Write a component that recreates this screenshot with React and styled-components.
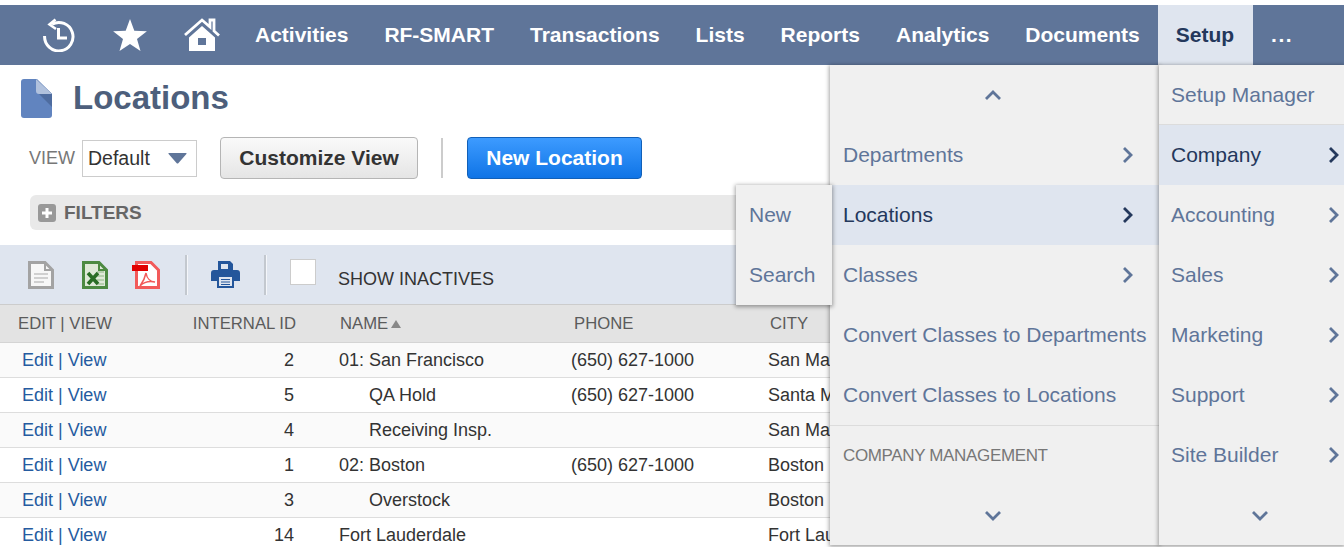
import React from "react";
import styled, { createGlobalStyle } from "styled-components";

const GlobalStyle = createGlobalStyle`
  html, body {
    margin: 0;
    height: 100%;
    overflow: hidden;
    background: #fff;
    font-family: "Liberation Sans", Arial, sans-serif;
  }
`;

const Page = styled.div`
  position: relative;
  width: 1344px;
  height: 547px;
  overflow: hidden;
  padding-top: 5px;
  box-sizing: border-box;
`;

const NavBar = styled.nav`
  height: 60px;
  background: #5f7599;
  display: flex;
  align-items: stretch;
`;

const NavIcons = styled.div`
  width: 237px;
  padding-left: 42px;
  box-sizing: border-box;
  display: flex;
  align-items: center;
  gap: 37px;
`;

const NavItem = styled.div`
  display: flex;
  align-items: center;
  padding: 0 ${(p) => (p.$active ? 19 : 18)}px 0 18px;
  font-size: 21px;
  font-weight: 700;
  letter-spacing: ${(p) => p.$spacing || 0}px;
  color: ${(p) => (p.$active ? "#24385c" : "#fff")};
  background: ${(p) => (p.$active ? "#dfe5ef" : "transparent")};
`;

const TitleRow = styled.div`
  height: 64px;
  box-sizing: border-box;
  padding: 2px 0 0 21px;
  display: flex;
  align-items: center;
  gap: 21px;
`;

const Title = styled.h1`
  margin: 0;
  font-size: 33px;
  font-weight: 700;
  color: #4d5f7c;
`;

const ViewRow = styled.div`
  height: 58px;
  padding: 0 0 0 29px;
  display: flex;
  align-items: center;
`;

const ViewLabel = styled.span`
  font-size: 18px;
  color: #777;
  margin-right: 7px;
`;

const SelectBox = styled.div`
  width: 115px;
  height: 37px;
  box-sizing: border-box;
  border: 1px solid #ccc;
  display: flex;
  align-items: center;
  padding: 0 9px 0 5px;
  justify-content: space-between;
  font-size: 19.5px;
  color: #333;
  margin-right: 23px;
`;

const Button = styled.div`
  height: 42px;
  box-sizing: border-box;
  display: flex;
  align-items: center;
  justify-content: center;
  width: ${(p) => p.$width}px;
  border-radius: 4px;
  font-size: 21px;
  font-weight: 700;
  border: 1px solid ${(p) => (p.$primary ? "#1160b8" : "#b5b5b5")};
  color: ${(p) => (p.$primary ? "#fff" : "#333")};
  background: ${(p) =>
    p.$primary
      ? "linear-gradient(#3d9bff, #0f74e6)"
      : "linear-gradient(#fafafa, #e5e5e5)"};
`;

const ButtonDivider = styled.div`
  width: 2px;
  height: 40px;
  background: #ccc;
  margin: 0 24px 0 23px;
`;

const FilterBar = styled.div`
  height: 35px;
  margin: 8px 0 15px 30px;
  background: #e9e9e9;
  border-radius: 6px 0 0 6px;
  display: flex;
  align-items: center;
  padding-left: 8px;
  gap: 8px;
  font-size: 19px;
  font-weight: 700;
  color: #666;
`;

const PlusBox = styled.span`
  width: 18px;
  height: 18px;
  border-radius: 3px;
  background: #999;
  display: flex;
  align-items: center;
  justify-content: center;
`;

const Toolbar = styled.div`
  height: 60px;
  box-sizing: border-box;
  background: #dfe5ef;
  border-bottom: 1px solid #ccc;
  display: flex;
  align-items: center;
  padding-left: 28px;
`;

const ToolIcon = styled.span`
  display: flex;
  width: ${(p) => p.$width || 26}px;
  margin-right: ${(p) => p.$gap || 0}px;
`;

const ToolDivider = styled.span`
  width: 2px;
  height: 40px;
  background: #c3c8cf;
  border-right: 1px solid #f4f6fa;
  margin-right: ${(p) => p.$gap}px;
`;

const CheckBox = styled.span`
  width: 26px;
  height: 26px;
  box-sizing: border-box;
  background: #fff;
  border: 1px solid #ccc;
  margin: -6px 22px 0 0;
`;

const ToolLabel = styled.span`
  font-size: 18px;
  color: #333;
  margin-top: 9px;
`;

const HeaderRow = styled.div`
  height: 38px;
  box-sizing: border-box;
  background: #e3e3e3;
  border-bottom: 1px solid #d4d4d4;
  display: grid;
  grid-template-columns: 132px 146px 278px 196px 1fr;
  align-items: center;
  padding-left: 18px;
  font-size: 16.7px;
  color: #5b5b5b;
`;

const HeadCell = styled.div`
  padding-left: ${(p) => p.$pad || 0}px;
  display: flex;
  align-items: center;
  justify-content: ${(p) => (p.$right ? "flex-end" : "flex-start")};
  gap: 3px;
`;

const SortMark = styled.span`
  width: 0;
  height: 0;
  border-left: 5px solid transparent;
  border-right: 5px solid transparent;
  border-bottom: 8px solid #888;
`;

const Row = styled.div`
  height: 35px;
  box-sizing: border-box;
  background: ${(p) => (p.$odd ? "#fafafa" : "#fff")};
  border-bottom: 1px solid #ddd;
  display: grid;
  grid-template-columns: 130px 142px 277px 197px 1fr;
  align-items: center;
  padding-left: 22px;
  font-size: 18px;
  color: #333;
  white-space: nowrap;
`;

const EditLink = styled.div`
  color: #255ba0;
`;

const IdCell = styled.div`
  text-align: right;
`;

const NameCell = styled.div`
  padding-left: ${(p) => (p.$indent ? 75 : 45)}px;
`;

const Menu = styled.div`
  position: absolute;
  top: ${(p) => p.$top}px;
  left: ${(p) => p.$left}px;
  width: ${(p) => p.$width}px;
  background: #f0f0f0;
  box-shadow: 0 1px 4px 1px rgba(0, 0, 0, 0.35);
`;

const MenuRow = styled.div`
  height: 60px;
  box-sizing: border-box;
  display: flex;
  align-items: center;
  justify-content: space-between;
  padding: 0 ${(p) => p.$right ?? 26}px 0 ${(p) => p.$pad ?? 13}px;
  font-size: 21px;
  color: ${(p) => (p.$active ? "#24385c" : "#5f7599")};
  background: ${(p) => (p.$active ? "#dfe5ef" : "transparent")};
  border-bottom: ${(p) => (p.$line ? "1px solid #dcdcdc" : "none")};
  border-top: ${(p) => (p.$lineTop ? "1px solid #dcdcdc" : "none")};
  white-space: nowrap;
`;

const ArrowRow = styled.div`
  height: 60px;
  display: flex;
  align-items: center;
  justify-content: center;
  padding-left: ${(p) => p.$shiftRight || 0}px;
  padding-right: ${(p) => p.$shiftLeft || 0}px;
`;

const MenuHeading = styled.span`
  font-size: 17px;
  letter-spacing: -0.35px;
  color: #777;
  margin-top: 1px;
`;

function Chevron({ dir = "right", color = "#5f7599" }) {
  const points = {
    right: "2,2 9,9 2,16",
    up: "2,9 9,2 16,9",
    down: "2,2 9,9 16,2",
  }[dir];
  const size = dir === "right" ? [11, 18] : [18, 11];
  return (
    <svg width={size[0]} height={size[1]} viewBox={`0 0 ${size[0]} ${size[1]}`} fill="none">
      <polyline points={points} stroke={color} strokeWidth="2.8" />
    </svg>
  );
}

function HistoryIcon() {
  return (
    <svg width="34" height="34" viewBox="0 0 34 34" fill="none" stroke="#fff" strokeWidth="3">
      <path d="M10 6.2A14.2 14.2 0 1 1 2.6 18" />
      <path d="M13.5 1.5 L7.5 6.5 L14 11" strokeWidth="2.6" />
      <path d="M16.5 10V20H25" strokeWidth="3" />
    </svg>
  );
}

function StarIcon() {
  return (
    <svg width="34" height="34" viewBox="0 0 34 34" fill="#fff">
      <path d="M17 1l4.3 11.8 12.6.4-9.9 7.8 3.5 12.1L17 26l-10.5 7.1L10 21 .1 13.2l12.6-.4z" />
    </svg>
  );
}

function HomeIcon() {
  return (
    <svg width="36" height="34" viewBox="0 0 36 34">
      <path d="M1 17L18 2l8 7V2h4v11l5 4.5" fill="none" stroke="#fff" strokeWidth="2.8" />
      <path fillRule="evenodd" fill="#fff" d="M18 8L31 19.5V33H5V19.5zM14 20v7h8v-7z" />
    </svg>
  );
}

function PageIcon() {
  return (
    <svg width="31" height="39" viewBox="0 0 31 39">
      <path d="M3 0H16L31 15V36a3 3 0 0 1-3 3H3a3 3 0 0 1-3-3V3a3 3 0 0 1 3-3z" fill="#6184bf" />
      <path d="M15 0L31 15V28L15 12z" fill="#4e6c9f" />
      <path d="M15 0L31 15H18a3 3 0 0 1-3-3z" fill="#b0c1dd" />
    </svg>
  );
}

function SheetIcon({ color, fill, children }) {
  return (
    <svg width="26" height="28" viewBox="0 0 26 28">
      <path d="M1.5 1.5H17L24.5 9V26.5H1.5z" fill={fill} stroke={color} strokeWidth="3" />
      <path d="M17 1.5V9H24.5" fill="none" stroke={color} strokeWidth="2" />
      {children}
    </svg>
  );
}

function PrintIcon() {
  return (
    <svg width="29" height="27" viewBox="0 0 29 27">
      <path d="M7 0H19L22 3V10H7z" fill="#24569b" />
      <path d="M10 3H17V8H10z" fill="#dfe5ef" />
      <path d="M3 9H26a3 3 0 0 1 3 3V20H23V27H6V20H0V12a3 3 0 0 1 3-3z" fill="#24569b" />
      <path d="M8 16H21V25H8z" fill="#dfe5ef" />
      <path d="M10 18.5H19M10 21H19M10 23.5H19" stroke="#24569b" strokeWidth="1.2" />
    </svg>
  );
}

const rows = [
  { id: 2, name: "01: San Francisco", phone: "(650) 627-1000", city: "San Mateo" },
  { id: 5, name: "QA Hold", indent: true, phone: "(650) 627-1000", city: "Santa Monica" },
  { id: 4, name: "Receiving Insp.", indent: true, phone: "", city: "San Mateo" },
  { id: 1, name: "02: Boston", phone: "(650) 627-1000", city: "Boston" },
  { id: 3, name: "Overstock", indent: true, phone: "", city: "Boston" },
  { id: 14, name: "Fort Lauderdale", phone: "", city: "Fort Lauderdale" },
];

const navLinks = ["Activities", "RF-SMART", "Transactions", "Lists", "Reports", "Analytics", "Documents"];
const setupLinks = ["Company", "Accounting", "Sales", "Marketing", "Support", "Site Builder"];

export default function App() {
  return (
    <Page>
      <GlobalStyle />
      <NavBar>
        <NavIcons>
          <HistoryIcon />
          <StarIcon />
          <HomeIcon />
        </NavIcons>
        {navLinks.map((link) => (
          <NavItem key={link}>{link}</NavItem>
        ))}
        <NavItem $active>Setup</NavItem>
        <NavItem $spacing={1.5}>...</NavItem>
      </NavBar>

      <TitleRow>
        <PageIcon />
        <Title>Locations</Title>
      </TitleRow>

      <ViewRow>
        <ViewLabel>VIEW</ViewLabel>
        <SelectBox>
          Default
          <svg width="19" height="11" viewBox="0 0 19 11">
            <path d="M1 0H18Q19 0 18.4 1L10.5 10Q9.5 11 8.5 10L.6 1Q0 0 1 0z" fill="#5f7599" />
          </svg>
        </SelectBox>
        <Button $width={198}>Customize View</Button>
        <ButtonDivider />
        <Button $width={175} $primary>New Location</Button>
      </ViewRow>

      <FilterBar>
        <PlusBox>
          <svg width="12" height="12" viewBox="0 0 12 12">
            <path d="M6 1V11M1 6H11" stroke="#fff" strokeWidth="3" />
          </svg>
        </PlusBox>
        FILTERS
      </FilterBar>

      <Toolbar>
        <ToolIcon $gap={28}>
          <SheetIcon color="#a3a3a3" fill="#f7f7f7">
            <path d="M6 13H20M6 17H20M6 21H16" stroke="#c4c4c4" strokeWidth="1.6" />
          </SheetIcon>
        </ToolIcon>
        <ToolIcon $gap={24}>
          <SheetIcon color="#4d8a42" fill="#dfe9d8">
            <path d="M15 11H22M15 15H22M15 19H22M15 23H22" stroke="#a9c69f" strokeWidth="1.6" />
            <path d="M6 12L16 23M16 12L6 23" stroke="#2a6d25" strokeWidth="3.6" />
          </SheetIcon>
        </ToolIcon>
        <ToolIcon $gap={25} $width={28}>
          <svg width="28" height="28" viewBox="0 0 28 28">
            <path d="M4.5 1.5H19L26.5 9V26.5H4.5z" fill="#fff" stroke="#f25a5a" strokeWidth="3" />
            <path d="M0 4H16V10H0z" fill="#e00000" />
            <path d="M14 12C15 18 19 21 23 21C18 20 12 21 8 25C11 21 13 17 14 12z" fill="none" stroke="#f25a5a" strokeWidth="1.5" />
          </svg>
        </ToolIcon>
        <ToolDivider $gap={23} />
        <ToolIcon $gap={24} $width={29}>
          <PrintIcon />
        </ToolIcon>
        <ToolDivider $gap={23} />
        <CheckBox />
        <ToolLabel>SHOW INACTIVES</ToolLabel>
      </Toolbar>

      <HeaderRow>
        <HeadCell>EDIT | VIEW</HeadCell>
        <HeadCell $right>INTERNAL ID</HeadCell>
        <HeadCell $pad={44}>NAME<SortMark /></HeadCell>
        <HeadCell>PHONE</HeadCell>
        <HeadCell>CITY</HeadCell>
      </HeaderRow>

      {rows.map((row, i) => (
        <Row key={row.id} $odd={i % 2 === 0}>
          <EditLink>Edit | View</EditLink>
          <IdCell>{row.id}</IdCell>
          <NameCell $indent={row.indent}>{row.name}</NameCell>
          <div>{row.phone}</div>
          <div>{row.city}</div>
        </Row>
      ))}

      <Menu $top={65} $left={830} $width={329}>
        <ArrowRow $shiftLeft={3}><Chevron dir="up" /></ArrowRow>
        <MenuRow>Departments<Chevron /></MenuRow>
        <MenuRow $active>Locations<Chevron color="#24385c" /></MenuRow>
        <MenuRow>Classes<Chevron /></MenuRow>
        <MenuRow>Convert Classes to Departments</MenuRow>
        <MenuRow>Convert Classes to Locations</MenuRow>
        <MenuRow $lineTop><MenuHeading>COMPANY MANAGEMENT</MenuHeading></MenuRow>
        <ArrowRow $shiftLeft={3}><Chevron dir="down" /></ArrowRow>
      </Menu>

      <Menu $top={185} $left={736} $width={96}>
        <MenuRow $right={0}>New</MenuRow>
        <MenuRow $right={0}>Search</MenuRow>
      </Menu>

      <Menu $top={65} $left={1159} $width={185}>
        <MenuRow $pad={12} $line>Setup Manager</MenuRow>
        {setupLinks.map((link, i) => (
          <MenuRow key={link} $pad={12} $right={5} $active={i === 0}>
            {link}
            <Chevron color={i === 0 ? "#24385c" : "#5f7599"} />
          </MenuRow>
        ))}
        <ArrowRow $shiftRight={17}><Chevron dir="down" /></ArrowRow>
      </Menu>
    </Page>
  );
}
